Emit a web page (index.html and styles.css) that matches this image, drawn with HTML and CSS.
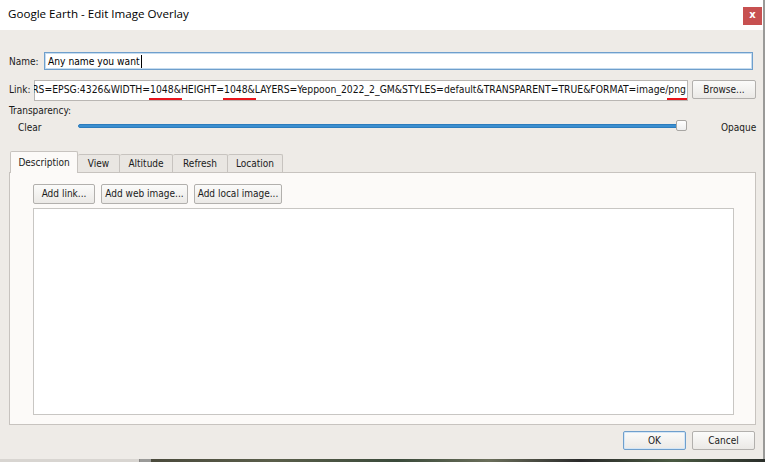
FILE: index.html
```html
<!DOCTYPE html>
<html>
<head>
<meta charset="utf-8">
<link rel="stylesheet" href="styles.css">
</head>
<body>
<div class="window">
  <div class="titlebar">
    <span class="title">Google Earth - Edit Image Overlay</span>
    <span class="close">x</span>
  </div>
  <div class="content">
    <div class="row name-row">
      <span class="label">Name:</span>
      <div class="input name-input"><span>Any name you want</span><span class="caret"></span></div>
    </div>
    <div class="row link-row">
      <span class="label">Link:</span>
      <div class="link-field"><span class="link-text">RS=EPSG:4326&amp;WIDTH=<span class="mark">1048&amp;</span>HEIGHT=<span class="mark">1048&amp;</span>LAYERS=Yeppoon_2022_2_GM&amp;STYLES=default&amp;TRANSPARENT=TRUE&amp;FORMAT=image/<span class="mark">png</span></span></div>
      <button class="btn browse">Browse...</button>
    </div>
    <div class="trans-label">Transparency:</div>
    <div class="slider-row">
      <span class="clear">Clear</span>
      <div class="slider"><div class="track"></div><div class="handle"></div></div>
      <span class="opaque">Opaque</span>
    </div>
    <div class="tabs">
      <span class="tab active">Description</span>
      <span class="tab">View</span>
      <span class="tab">Altitude</span>
      <span class="tab">Refresh</span>
      <span class="tab">Location</span>
    </div>
    <div class="panel">
      <div class="panel-buttons">
        <button class="btn">Add link...</button>
        <button class="btn">Add web image...</button>
        <button class="btn">Add local image...</button>
      </div>
      <div class="textarea"></div>
    </div>
    <div class="footer">
      <button class="btn ok">OK</button>
      <button class="btn cancel">Cancel</button>
    </div>
  </div>
</div>
<div class="below">
  <div class="below-left"></div>
  <div class="below-img"></div>
</div>
</body>
</html>
```
FILE: styles.css
```css
* { box-sizing: border-box; }
html, body {
  margin: 0;
  padding: 0;
}
body {
  width: 765px;
  height: 462px;
  overflow: hidden;
  background: #9a9a98;
  font-family: "DejaVu Sans Condensed", "DejaVu Sans", sans-serif;
  font-size: 10px;
  color: #1a1a1a;
}
.window {
  width: 763px;
  height: 459px;
  background: #eeebe7;
  display: flex;
  flex-direction: column;
}
.titlebar {
  height: 30px;
  background: #ffffff;
  display: flex;
  align-items: flex-start;
  justify-content: space-between;
  padding-left: 8px;
  flex-shrink: 0;
}
.title {
  font-family: "Open Sans", "Noto Sans", sans-serif;
  font-size: 11.6px;
  color: #000;
  margin-top: 6px;
}
.close {
  width: 19px;
  height: 18px;
  margin-top: 7px;
  margin-right: 1px;
  background: #c75050;
  color: #fff;
  font-family: "DejaVu Sans", sans-serif;
  font-weight: bold;
  font-size: 10px;
  display: flex;
  align-items: center;
  justify-content: center;
  line-height: 1;
  padding-bottom: 2px;
}
.content {
  flex: 1;
  display: flex;
  flex-direction: column;
  padding: 0 0 0 9px;
}
.row {
  display: flex;
  align-items: center;
}
.name-row {
  margin-top: 22px;
  height: 18px;
}
.name-row .label { width: 35px; }
.link-row .label { width: 25px; }
.input {
  background: #fff;
  height: 18px;
  display: flex;
  align-items: center;
  white-space: nowrap;
  overflow: hidden;
}
.name-input {
  width: 709px;
  border: 1px solid #6f9fcc;
  box-shadow: inset 0 0 0 1px #c5dcf0;
  padding-left: 3px;
  color: #000;
  font-size: 10.2px;
}
.caret {
  display: inline-block;
  width: 1px;
  height: 13px;
  background: #000;
  margin-left: 1px;
}
.link-row {
  margin-top: 10px;
  height: 19px;
  align-items: flex-start;
}
.link-row .label { line-height: 19px; }
.link-field {
  position: relative;
  width: 654px;
  height: 24px;
  overflow: hidden;
  display: flex;
  justify-content: flex-end;
  align-items: flex-start;
  white-space: nowrap;
  padding: 0 2px 0 0;
}
.link-field::before {
  content: "";
  position: absolute;
  left: 0;
  top: 0;
  right: 0;
  height: 19px;
  background: #fff;
  border: 1px solid #b9b6b3;
}
.link-text {
  position: relative;
  flex-shrink: 0;
  line-height: 19px;
  font-size: 10.3px;
  color: #111;
}
.mark {
  position: relative;
}
.mark::after {
  content: "";
  position: absolute;
  left: -1px;
  right: -1px;
  bottom: -5px;
  height: 2px;
  background: #e8141b;
}
.btn {
  font-family: inherit;
  font-size: 10px;
  color: #1a1a1a;
  height: 20px;
  padding: 0;
  border: 1px solid #b2b0ad;
  border-radius: 2px;
  background: linear-gradient(#fbfbfa, #ebe9e6);
  line-height: 1;
  white-space: nowrap;
}
.browse {
  margin-left: 4px;
  width: 64px;
  height: 19px;
}
.trans-label {
  margin-top: 5px;
  height: 14px;
  line-height: 14px;
}
.slider-row {
  display: flex;
  align-items: center;
  height: 14px;
  margin-top: 2px;
}
.clear {
  margin-left: 9px;
  width: 60px;
}
.slider {
  width: 609px;
  height: 12px;
  position: relative;
  display: flex;
  align-items: center;
  margin-top: -3px;
}
.track {
  width: 602px;
  height: 4px;
  background: #3b8fd0;
  border: 1px solid #2c7cbd;
  border-radius: 2px;
}
.handle {
  position: absolute;
  left: 598px;
  top: 0;
  width: 11px;
  height: 11px;
  border: 1px solid #a8a6a3;
  border-radius: 2px;
  background: linear-gradient(#ffffff, #eeeeee);
}
.opaque {
  margin-left: 34px;
}
.tabs {
  display: flex;
  align-items: flex-end;
  margin-top: 17px;
  margin-left: 1px;
  height: 21px;
  position: relative;
  z-index: 1;
}
.tab {
  height: 18px;
  border: 1px solid #c7c3bf;
  border-bottom: none;
  border-left: none;
  background: #e9e6e2;
  display: flex;
  align-items: center;
  justify-content: center;
  border-radius: 2px 2px 0 0;
}
.tab.active {
  border-left: 1px solid #c7c3bf;
  background: #fcfaf8;
  margin-bottom: -1px;
  height: 22px;
  width: 68px;
}
.tab:nth-child(2) { width: 42px; }
.tab:nth-child(3) { width: 53px; }
.tab:nth-child(4) { width: 55px; }
.tab:nth-child(5) { width: 55px; }
.panel {
  width: 747px;
  height: 253px;
  border: 1px solid #c7c3bf;
  background: #fcfaf8;
  padding: 11px 21px 9px 23px;
  display: flex;
  flex-direction: column;
}
.panel-buttons {
  display: flex;
  gap: 6px;
}
.panel-buttons .btn:nth-child(1) { width: 62px; }
.panel-buttons .btn:nth-child(2) { width: 87px; }
.panel-buttons .btn:nth-child(3) { width: 88px; }
.textarea {
  margin-top: 4px;
  flex: 1;
  background: #fff;
  border: 1px solid #c8c6c3;
}
.footer {
  display: flex;
  justify-content: flex-end;
  gap: 6px;
  margin-top: 6px;
  padding-right: 8px;
}
.footer .btn {
  width: 63px;
  height: 19px;
}
.ok {
  border-color: #6f9fcc !important;
  box-shadow: inset 0 0 0 1px #d4e6f6;
}
.below {
  display: flex;
  height: 3px;
}
.below-left {
  width: 140px;
  background: #d8d5d1;
  border-right: 1px solid #8a8886;
}
.below-img {
  flex: 1;
  margin-left: 11px;
  background: linear-gradient(90deg, #4a4a3c, #5a5e4a 20%, #3a4a3a 40%, #6a6e5a 55%, #2a2a2a 70%, #4a5a42 85%, #2a2e2a);
}
```
